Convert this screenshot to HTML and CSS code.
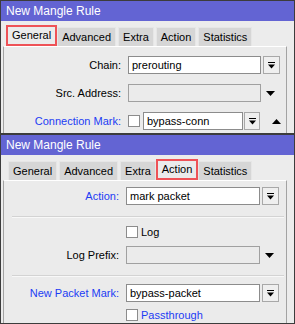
FILE: index.html
```html
<!DOCTYPE html>
<html lang="en">
<head>
    <meta charset="UTF-8">
    <title>New Mangle Rule</title>
    <link rel="stylesheet" href="styles.css">
</head>
<body>
    <!-- first window: General tab -->
    <div class="window win-general">
        <div class="titlebar">New Mangle Rule</div>
        <div class="tabs">
            <span class="tab active">General</span>
            <span class="tab">Advanced</span>
            <span class="tab">Extra</span>
            <span class="tab">Action</span>
            <span class="tab">Statistics</span>
        </div>
        <div class="pane pane-general">
            <div class="row">
                <span class="label">Chain:</span>
                <span class="input">prerouting</span>
                <span class="btn"><svg width="7" height="7" viewBox="0 0 7 7"><rect x="0" y="0" width="7" height="1" fill="#000"/><path d="M0 2.5H7L3.5 6.5Z" fill="#000"/></svg></span>
            </div>
            <div class="row">
                <span class="label">Src. Address:</span>
                <span class="input disabled"></span>
                <span class="arrow"><svg width="9" height="5" viewBox="0 0 9 5"><path d="M0 0H9L4.5 5Z" fill="#000"/></svg></span>
            </div>
            <div class="row">
                <span class="label blue">Connection Mark:</span>
                <span class="check"></span>
                <span class="input short">bypass-conn</span>
                <span class="btn tight"><svg width="7" height="7" viewBox="0 0 7 7"><rect x="0" y="0" width="7" height="1" fill="#000"/><path d="M0 2.5H7L3.5 6.5Z" fill="#000"/></svg></span>
                <span class="arrow up"><svg width="9" height="5" viewBox="0 0 9 5"><path d="M0 5H9L4.5 0Z" fill="#000"/></svg></span>
            </div>
        </div>
    </div>

    <!-- second window: Action tab -->
    <div class="window win-action">
        <div class="titlebar">New Mangle Rule</div>
        <div class="tabs">
            <span class="tab">General</span>
            <span class="tab">Advanced</span>
            <span class="tab">Extra</span>
            <span class="tab active">Action</span>
            <span class="tab">Statistics</span>
        </div>
        <div class="pane pane-action">
            <div class="row">
                <span class="label blue">Action:</span>
                <span class="input">mark packet</span>
                <span class="btn"><svg width="7" height="7" viewBox="0 0 7 7"><rect x="0" y="0" width="7" height="1" fill="#000"/><path d="M0 2.5H7L3.5 6.5Z" fill="#000"/></svg></span>
            </div>
            <div class="sep"></div>
            <div class="row small">
                <span class="label"></span>
                <span class="check"></span>
                <span class="check-text">Log</span>
            </div>
            <div class="row">
                <span class="label">Log Prefix:</span>
                <span class="input disabled"></span>
                <span class="arrow"><svg width="9" height="5" viewBox="0 0 9 5"><path d="M0 0H9L4.5 5Z" fill="#000"/></svg></span>
            </div>
            <div class="sep"></div>
            <div class="row">
                <span class="label blue">New Packet Mark:</span>
                <span class="input">bypass-packet</span>
                <span class="btn"><svg width="7" height="7" viewBox="0 0 7 7"><rect x="0" y="0" width="7" height="1" fill="#000"/><path d="M0 2.5H7L3.5 6.5Z" fill="#000"/></svg></span>
            </div>
            <div class="row small">
                <span class="label"></span>
                <span class="check"></span>
                <span class="check-text blue">Passthrough</span>
            </div>
        </div>
    </div>
</body>
</html>
```

FILE: styles.css
```css
body {
    margin: 0;
    width: 295px;
    height: 324px;
    overflow: hidden;
    font-family: "Liberation Sans", Arial, sans-serif;
    font-size: 11px;
    color: #000;
    background: #ececec;
}

.window {
    border: 1px solid #3c3c3c;
    background: #ececec;
    display: flex;
    flex-direction: column;
    box-sizing: border-box;
    overflow: hidden;
}

.win-general {
    height: 134px;
}

.win-action {
    height: 190px;
}

.titlebar {
    height: 20px;
    line-height: 20px;
    background: #6364d3;
    color: #fff;
    font-size: 12px;
    padding-left: 5px;
}

/* tab strip */
.tabs {
    display: flex;
    align-items: flex-end;
    height: 25px;
    padding-left: 7px;
}

.tab {
    height: 19px;
    line-height: 19px;
    padding: 0 4px;
    margin-right: 2px;
    background: #d6d6d6;
    border: 1px solid #e6e6e6;
    border-bottom: none;
    box-sizing: border-box;
}

.tab.active {
    height: 21px;
    line-height: 19px;
    margin: 0 0 0 -2px;
    padding: 0 5px;
    background: #ebebeb;
    outline: 2px solid #ee5257;
    outline-offset: -2px;
}

.pane {
    flex: 1;
    margin: 0 7px 0 2px;
    background: #ebebeb;
    border-left: 1px solid #a3a3a3;
    border-right: 1px solid #a3a3a3;
    border-top: 1px solid #fff;
    display: flex;
    flex-direction: column;
}

.pane-general {
    padding-top: 9px;
    gap: 10px;
}

.pane-action {
    padding-top: 6px;
}

.row {
    display: flex;
    align-items: center;
    height: 18px;
}

.row.small {
    height: 12px;
}

.label {
    width: 117px;
    text-align: right;
    margin-right: 7px;
    flex-shrink: 0;
}

.pane-action .label {
    width: 115px;
}

.blue {
    color: #1c3cf4;
}

.input {
    width: 133px;
    height: 18px;
    line-height: 16px;
    box-sizing: border-box;
    border: 1px solid #8c8c8c;
    background: #fff;
    padding-left: 3px;
}

.pane-action .input {
    width: 134px;
}

.input.disabled {
    background: #ebebeb;
    border-color: #a0a0a0;
}

.input.short {
    width: 100px;
    margin-left: 3px;
}

.btn {
    width: 17px;
    height: 18px;
    margin-left: 2px;
    box-sizing: border-box;
    border: 1px solid #a8a8a8;
    background: #efefef;
    display: flex;
    align-items: center;
    justify-content: center;
}

.btn.tight {
    width: 16px;
    margin-left: 1px;
}

.arrow {
    width: 9px;
    margin-left: 5px;
    display: flex;
    align-items: center;
}

.arrow.up {
    margin-left: 12px;
}

.check {
    width: 12px;
    height: 12px;
    box-sizing: border-box;
    border: 1px solid #8c8c8c;
    background: #fff;
}

.check-text {
    margin-left: 3px;
}

.sep {
    height: 1px;
    margin: 11px 2px 8px 8px;
    background: #d3d3d3;
    border-bottom: 1px solid #f8f8f8;
}

.pane-action .row.small + .row {
    margin-top: 8px;
}

.pane-action .sep + .row:not(.small) {
    margin-top: -1px;
}

.pane-action .row + .row.small {
    margin-top: 7px;
}
```
